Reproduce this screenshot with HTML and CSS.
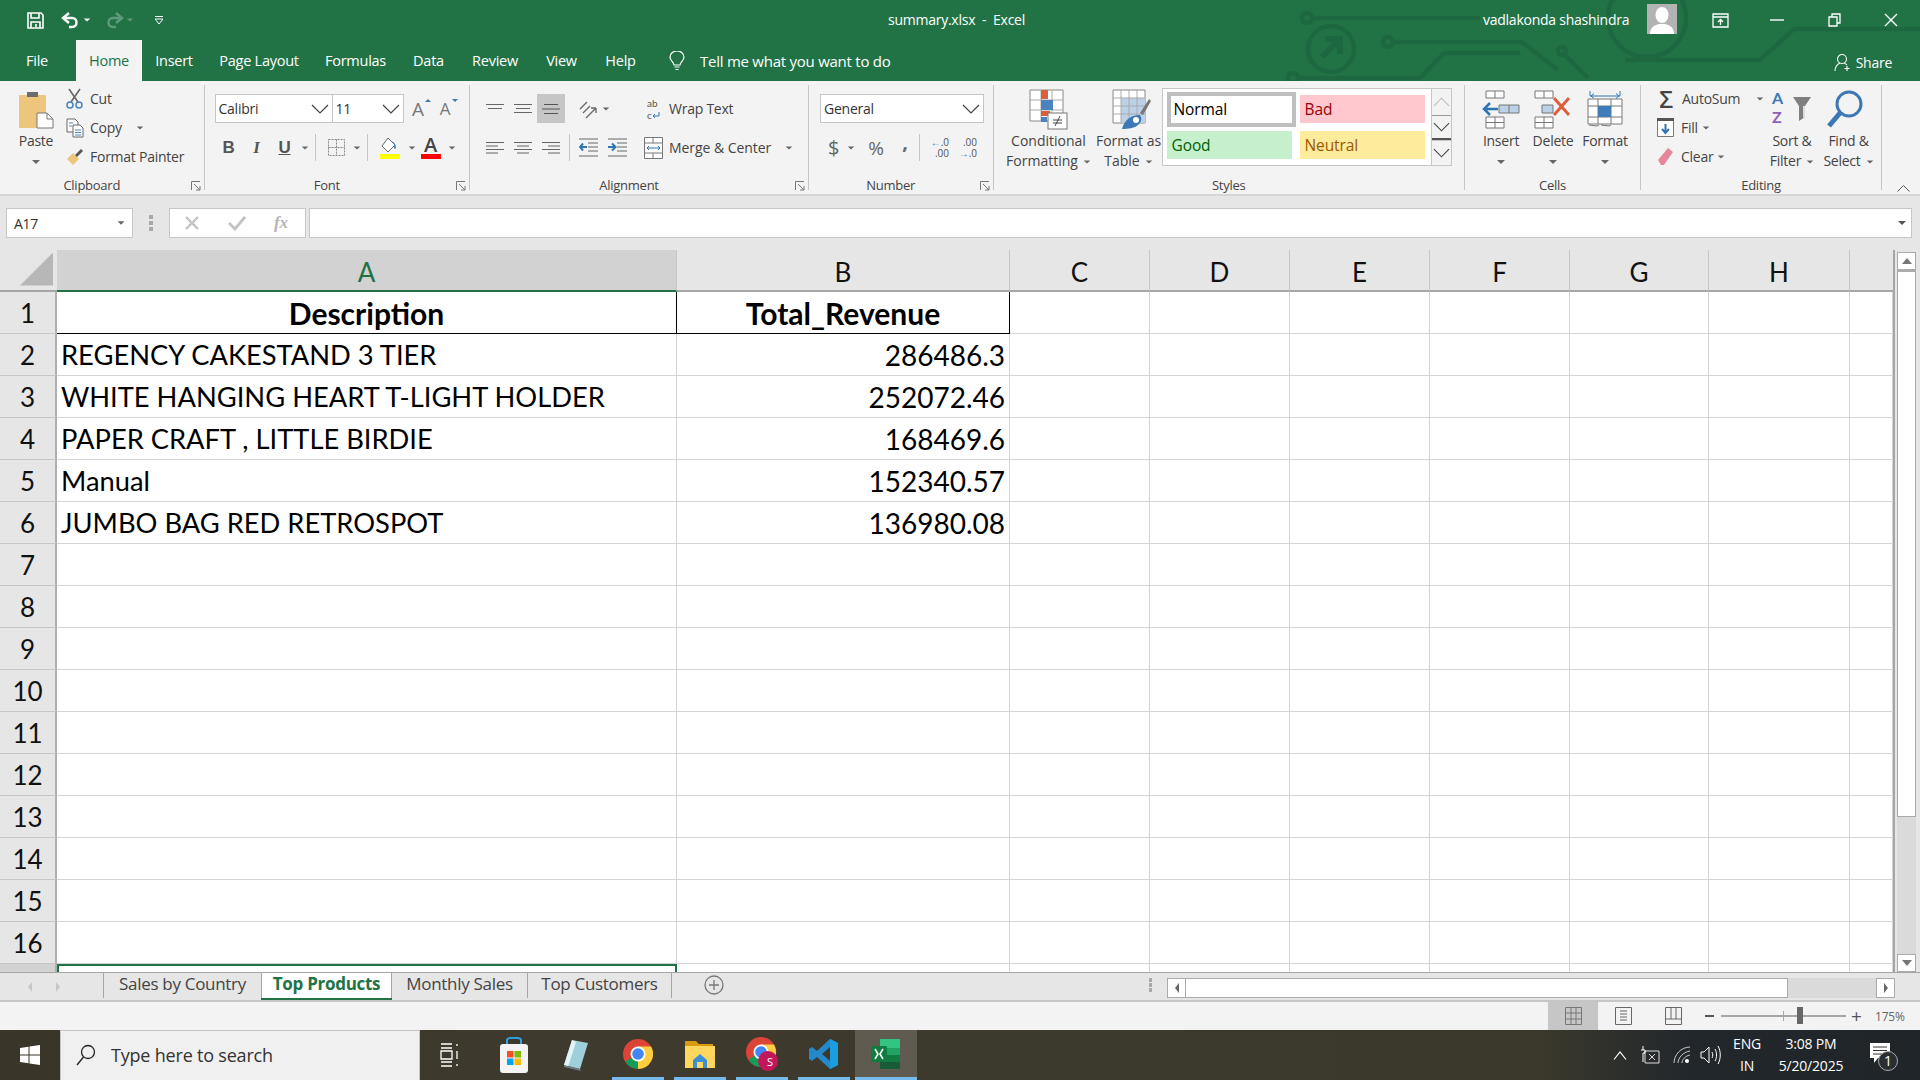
FILE: index.html
```html
<!DOCTYPE html>
<html lang="en">
<head>
<meta charset="UTF-8">
<title>summary.xlsx - Excel</title>
<link rel="stylesheet" href="styles.css">
</head>
<body>

<!-- title bar + tabs -->
<header class="top">
  <svg class="circuit" width="1920" height="81" viewBox="0 0 1920 81" fill="none" stroke="#1e6841" stroke-width="4.500">
    <circle cx="1307" cy="18" r="5"/><path d="M1312 18H1480"/>
    <circle cx="1331" cy="49" r="23"/><path d="M1322 57l18-18M1325 39h15v15" stroke-width="6"/>
    <circle cx="1388" cy="42" r="5"/><path d="M1393 42H1522l36 28M1562 52l26 26"/>
    <circle cx="1562" cy="51" r="4"/><circle cx="1293" cy="78" r="5"/><path d="M1298 78H1420l24-25H1520"/>
    <circle cx="1647" cy="18" r="39"/><path d="M1625 60H1760l34-31H1920"/>
  </svg>
  <div class="titlebar">
    <div class="qat">
      <svg class="qat-save" width="17" height="17" viewBox="0 0 17 17" fill="none" stroke="#fff" stroke-width="1.6"><path d="M1 1h13l2 2v13H1z"/><path d="M4 1v5h8V1" /><path d="M4 16v-6h9v6" /><path d="M9 12v3" /></svg>
      <svg class="qat-undo" width="20" height="17" viewBox="0 0 20 17" fill="none" stroke="#fff" stroke-width="2.4"><path d="M8 1L2 6l6 5"/><path d="M3 6h8c6 0 6 9 0 9H8"/></svg>
      <span class="caret qat-caret"></span>
      <svg class="qat-redo" width="20" height="17" viewBox="0 0 20 17" fill="none" stroke="#5f9a7c" stroke-width="2.4"><path d="M12 1l6 5-6 5"/><path d="M17 6H9c-6 0-6 9 0 9h3"/></svg>
      <span class="caret qat-caret dim"></span>
      <svg class="qat-more" width="10" height="10" viewBox="0 0 10 10" fill="none" stroke="#fff"><path d="M1 1.5h8M1 4l4 5 4-5z"/></svg>
    </div>
    <div class="doc-title">summary.xlsx&nbsp; -&nbsp; Excel</div>
    <div class="user-name">vadlakonda shashindra</div>
    <svg class="avatar" width="30" height="30" viewBox="0 0 30 30"><rect width="30" height="30" fill="#b3b3b3"/><ellipse cx="15" cy="11" rx="6.5" ry="8" fill="#fff"/><path d="M3 30c0-7 5-9 9-10h6c4 1 9 3 9 10z" fill="#fff"/></svg>
    <div class="win-btns">
      <svg width="17" height="15" viewBox="0 0 17 15" fill="none" stroke="#fff" stroke-width="1.3"><path d="M1 1h15v13H1zM1 4h15"/><path d="M8.5 12V6.5M6 9l2.5-2.5L11 9"/></svg>
      <svg width="14" height="2" viewBox="0 0 14 2"><path d="M0 1h14" stroke="#fff" stroke-width="1.4"/></svg>
      <svg width="13" height="14" viewBox="0 0 13 14" fill="none" stroke="#fff" stroke-width="1.3"><path d="M1 4h8v9H1zM4 4V1h8v9H9"/></svg>
      <svg width="14" height="14" viewBox="0 0 14 14"><path d="M1 1l12 12M13 1L1 13" stroke="#fff" stroke-width="1.4"/></svg>
    </div>
  </div>
  <nav class="tabs">
    <a>File</a><a class="on">Home</a><a>Insert</a><a>Page Layout</a><a>Formulas</a><a>Data</a><a>Review</a><a>View</a><a>Help</a>
    <div class="tellme">
      <svg width="16" height="20" viewBox="0 0 16 20" fill="none" stroke="#fff" stroke-width="1.2"><path d="M5 14c0-3-4-4-4-8a7 6 0 0 1 14 0c0 4-4 5-4 8z"/><path d="M5.5 16h5M6.5 18.500h3"/></svg>
      <span>Tell me what you want to do</span>
    </div>
    <div class="share">
      <svg width="18" height="19" viewBox="0 0 18 19" fill="none" stroke="#fff" stroke-width="1.1"><circle cx="8" cy="6" r="4.500"/><path d="M1 18c0-5 3-7 5-8M10 10c1 .4 2 1 3 2M13 13v5M10.500 15.500h5"/></svg>
      <span>Share</span>
    </div>
  </nav>
</header>

<!-- ribbon -->
<section class="ribbon">

  <div class="group">
    <div class="body clip-body">
      <div class="big paste">
        <svg width="36" height="40" viewBox="0 0 36 40"><rect x="1" y="5" width="27" height="33" fill="#eec57d" rx="1"/><path d="M9 2h11v5H9z" fill="#6d6d6d"/><path d="M19 23h10l6 6v9H19z" fill="#fff" stroke="#777"/><path d="M29 23v6h6" fill="none" stroke="#777"/></svg>
        <span>Paste</span>
        <i class="caret"></i>
      </div>
      <div class="stack">
        <div class="small"><svg width="18" height="22" viewBox="0 0 18 22" fill="none"><path d="M3 1l9 13M14 1L5 14" stroke="#666" stroke-width="1.6"/><circle cx="4" cy="17" r="3" stroke="#4a83bd" stroke-width="1.500"/><circle cx="13" cy="17" r="3" stroke="#4a83bd" stroke-width="1.500"/></svg><span>Cut</span></div>
        <div class="small"><svg width="18" height="20" viewBox="0 0 18 20" fill="#fff" stroke="#666"><path d="M1 1h8l3 3v10H1z"/><path d="M7 7h7l3 3v9H7z"/><path d="M9 12h6M9 14.500h6M9 17h6M3 5h4M3 8h3" stroke="#4a83bd"/></svg><span>Copy</span><i class="caret copy-caret"></i></div>
        <div class="small"><svg width="18" height="18" viewBox="0 0 18 18"><path d="M1 11l6-6 6 6-6 6z" fill="#eec57d"/><path d="M9 7l6-6 2 2-6 6z" fill="#555"/></svg><span>Format Painter</span></div>
      </div>
    </div>
    <div class="label with-launch">Clipboard<svg class="launch" width="10" height="10" viewBox="0 0 10 10" fill="none" stroke="#777"><path d="M.5 9V.5H9M3 3l6 6M9 5v4H5"/></svg></div>
  </div>

  <div class="group">
    <div class="body two-rows">
      <div class="row font-top">
        <div class="combo font-name">Calibri<svg class="chev" width="18" height="10" viewBox="0 0 18 10" fill="none" stroke="#444" stroke-width="1.2"><path d="M1 1l8 8 8-8"/></svg></div>
        <div class="combo font-size">11<svg class="chev" width="18" height="10" viewBox="0 0 18 10" fill="none" stroke="#444" stroke-width="1.2"><path d="M1 1l8 8 8-8"/></svg></div>
        <span class="grow">A<i class="tip up"></i></span><span class="grow shrink">A<i class="tip down"></i></span>
      </div>
      <div class="row font-bottom">
        <b class="fmt">B</b><em class="fmt">I</em><span class="fmt under">U</span><i class="caret"></i>
        <span class="vsep"></span>
        <svg class="borders" width="17" height="17" viewBox="0 0 17 17" fill="none" stroke="#888" stroke-dasharray="2 1"><path d="M.5.5h16v16H.5zM8.500 .5v16M.5 8.500h16"/></svg><i class="caret"></i>
        <span class="vsep"></span>
        <svg class="fill-ic" width="20" height="22" viewBox="0 0 20 22"><path d="M8 1l-6 8 6 6 7-7z" fill="#fff" stroke="#666"/><path d="M11 4c3 1 5 3 5 7 0 1-2 1-2 0V7z" fill="#4a83bd"/><rect y="17" width="20" height="5" fill="#ffff00"/></svg><i class="caret"></i>
        <span class="color-a">A</span><i class="caret"></i>
      </div>
    </div>
    <div class="label with-launch">Font<svg class="launch" width="10" height="10" viewBox="0 0 10 10" fill="none" stroke="#777"><path d="M.5 9V.5H9M3 3l6 6M9 5v4H5"/></svg></div>
  </div>

  <div class="group">
    <div class="body align-body">
      <div class="align-icons">
        <div class="row">
          <span class="al"><svg width="18" height="10" viewBox="0 0 18 10" stroke="#666"><path d="M0 .5h18M2 4.500h14"/></svg></span>
          <span class="al"><svg width="18" height="10" viewBox="0 0 18 10" stroke="#666"><path d="M0 .5h18M2 4.500h14M0 8.500h18"/></svg></span>
          <span class="al on"><svg width="18" height="12" viewBox="0 0 18 12" stroke="#555"><path d="M2 1.500h14M0 6h18M2 10.500h14"/></svg></span>
          <svg class="orient" width="20" height="20" viewBox="0 0 20 20" fill="none" stroke="#666"><path d="M2 10l7-7M5 14l7-7M8 19l10-10M18 9v5M18 9h-5" stroke-width="1.300"/></svg><i class="caret"></i>
        </div>
        <div class="row second">
          <span class="al"><svg width="18" height="12" viewBox="0 0 18 12" stroke="#666"><path d="M0 .5h18M0 4h12M0 7.500h18M0 11h12"/></svg></span>
          <span class="al"><svg width="18" height="12" viewBox="0 0 18 12" stroke="#666"><path d="M0 .5h18M3 4h12M0 7.500h18M3 11h12"/></svg></span>
          <span class="al"><svg width="18" height="12" viewBox="0 0 18 12" stroke="#666"><path d="M0 .5h18M6 4h12M0 7.500h18M6 11h12"/></svg></span>
          <span class="vsep"></span>
          <svg class="indent" width="19" height="19" viewBox="0 0 19 19" fill="none"><path d="M0 1h19M9 5h10M9 9h10M9 13h10M0 18h19" stroke="#666"/><path d="M8 9H1M4 5.500L1 9l3 3.500" stroke="#2f75b5" stroke-width="2"/></svg>
          <svg class="indent" width="19" height="19" viewBox="0 0 19 19" fill="none"><path d="M0 1h19M9 5h10M9 9h10M9 13h10M0 18h19" stroke="#666"/><path d="M0 9h7M4 5.500L7.500 9 4 12.500" stroke="#2f75b5" stroke-width="2"/></svg>
        </div>
      </div>
      <div class="align-wide">
        <div class="row"><span class="wrap-ic">ab<br>c<svg width="8" height="8" viewBox="0 0 8 8" fill="none" stroke="#2f75b5"><path d="M7 1v4H1M3 3L1 5l2 2"/></svg></span><span>Wrap Text</span></div>
        <div class="row second"><svg class="merge-ic" width="19" height="22" viewBox="0 0 19 22" fill="#fff" stroke="#777"><path d="M.5.5h18v21H.5zM.5 6h18M.5 16h18M9 .5V6M9 16v5"/><path d="M3 11h13M5 9l-2 2 2 2M14 9l2 2-2 2" stroke="#2f75b5" fill="none"/></svg><span class="merge-text">Merge &amp; Center</span><i class="caret merge-caret"></i></div>
      </div>
    </div>
    <div class="label with-launch">Alignment<svg class="launch" width="10" height="10" viewBox="0 0 10 10" fill="none" stroke="#777"><path d="M.5 9V.5H9M3 3l6 6M9 5v4H5"/></svg></div>
  </div>

  <div class="group">
    <div class="body two-rows num-body">
      <div class="row"><div class="combo num-format">General<svg class="chev" width="18" height="10" viewBox="0 0 18 10" fill="none" stroke="#444" stroke-width="1.2"><path d="M1 1l8 8 8-8"/></svg></div></div>
      <div class="row num-tools">
        <span class="sym dollar">$</span><i class="caret"></i><span class="sym pct">%</span><span class="sym comma">,</span><span class="vsep"></span>
        <span class="dec"><b>←</b>.0<br>.00</span><span class="dec">.00<br><b>→</b>.0</span>
      </div>
    </div>
    <div class="label with-launch">Number<svg class="launch" width="10" height="10" viewBox="0 0 10 10" fill="none" stroke="#777"><path d="M.5 9V.5H9M3 3l6 6M9 5v4H5"/></svg></div>
  </div>

  <div class="group">
    <div class="body styles-body">
      <div class="big cf">
        <svg width="40" height="42" viewBox="0 0 40 42"><path d="M1 1h33v31H1z" fill="#fff" stroke="#888"/><path d="M1 11h33M1 21h33M12 1v31M23 1v31" stroke="#aaa" fill="none"/><rect x="12" y="1" width="7" height="9" fill="#d9603b"/><rect x="12" y="11" width="12" height="10" fill="#4a83bd"/><rect x="12" y="22" width="9" height="5" fill="#d9603b"/><rect x="12" y="28" width="6" height="5" fill="#4a83bd"/><rect x="19" y="24" width="19" height="16" fill="#fff" stroke="#777"/><path d="M24 31h9M24 34h9M31 27l-5 10" stroke="#444"/></svg>
        <span>Conditional</span><span>Formatting<i class="caret inline"></i></span>
      </div>
      <div class="big ft">
        <svg width="40" height="42" viewBox="0 0 40 42"><path d="M1 1h32v33H1z" fill="#fff" stroke="#888"/><rect x="9" y="9" width="24" height="25" fill="#bcd1e8"/><path d="M1 9h32M1 17h32M1 25h32M9 1v33M17 1v33M25 1v33" stroke="#aaa"/><path d="M28 24l9-14 2 2-8 14z" fill="#777"/><path d="M10 40c2-8 8-14 18-14 2 3 2 7-2 10-3 3-10 4-16 4z" fill="#3c78b5"/><circle cx="24" cy="31" r="3" fill="#fff"/></svg>
        <span>Format as</span><span>Table<i class="caret inline"></i></span>
      </div>
      <div class="gallery">
        <div class="cell-styles">
          <div class="st normal">Normal</div><div class="st bad">Bad</div>
          <div class="st good">Good</div><div class="st neutral">Neutral</div>
        </div>
        <div class="gal-btns">
          <span class="off"><svg width="18" height="10" viewBox="0 0 18 10" fill="none" stroke="#bbb" stroke-width="1.200"><path d="M1 9l8-8 8 8"/></svg></span>
          <span><svg width="18" height="10" viewBox="0 0 18 10" fill="none" stroke="#444" stroke-width="1.200"><path d="M1 1l8 8 8-8"/></svg></span>
          <span class="more"><svg width="18" height="10" viewBox="0 0 18 10" fill="none" stroke="#444" stroke-width="1.200"><path d="M1 1l8 8 8-8"/></svg></span>
        </div>
      </div>
    </div>
    <div class="label">Styles</div>
  </div>

  <div class="group">
    <div class="body cells-body">
      <div class="big"><svg width="38" height="40" viewBox="0 0 38 40" fill="#fff" stroke="#777"><path d="M4 1h18v7H4zM13 1v7M4 27h18v11H4zM4 32.500h18M13 27v11"/><path d="M17 15h20v8H17zM27 15v8" fill="#bcd1e8"/><path d="M16 19H2M8 13l-6 6 6 6" fill="none" stroke="#2f75b5" stroke-width="2.500"/></svg><span>Insert</span><i class="caret"></i></div>
      <div class="big"><svg width="38" height="40" viewBox="0 0 38 40" fill="#fff" stroke="#777"><path d="M1 1h18v7H1zM10 1v7M1 27h18v11H1zM1 32.500h18M10 27v11"/><path d="M8 15h11v8H8z" fill="#bcd1e8"/><path d="M20 8l15 17M35 8L20 25" stroke="#d9603b" stroke-width="3" fill="none"/></svg><span>Delete</span><i class="caret"></i></div>
      <div class="big"><svg width="38" height="40" viewBox="0 0 38 40" fill="#fff" stroke="#777"><path d="M4 6H34M4 1v5M34 1v5" stroke="#2f75b5" /><path d="M8 3.500L5 6l3 2.500M30 3.500L33 6l-3 2.500" stroke="#2f75b5" fill="none"/><path d="M2 9h34v25H2zM2 16h34M2 27h34M12 9v25M25 9v25"/><rect x="12" y="16" width="13" height="11" fill="#3f7cb8" stroke="none"/><path d="M3 35l8 1 2-1M15 35l8 1 2-1" fill="none"/></svg><span>Format</span><i class="caret"></i></div>
    </div>
    <div class="label">Cells</div>
  </div>

  <div class="group last">
    <div class="body edit-body">
      <div class="stack edit-stack">
        <div class="small"><span class="sigma">Σ</span><span>AutoSum</span><i class="caret auto-caret"></i></div>
        <div class="small"><svg width="17" height="19" viewBox="0 0 17 19" fill="#fff" stroke="#777"><path d="M.5.500h16v18H.5z"/><path d="M0 1.500h17" stroke="#555" stroke-width="3"/><path d="M8.500 6v9M5 11l3.500 4 3.500-4" stroke="#2f75b5" stroke-width="2" fill="none"/></svg><span>Fill</span><i class="caret inline"></i></div>
        <div class="small"><svg width="17" height="19" viewBox="0 0 17 19"><path d="M1 13l10-12 5 4L7 18H4z" fill="#e8879b"/></svg><span>Clear</span><i class="caret inline"></i></div>
      </div>
      <div class="big sortf"><div class="az"><div class="az-letters"><span class="a">A</span><span class="z">Z</span></div><svg width="18" height="24" viewBox="0 0 18 24"><path d="M0 0h18l-6 9v11l-6 4V9z" fill="#7f7f7f"/><path d="M6 9h6v11l-2 1V9z" fill="#ddd"/></svg></div><span>Sort &amp;</span><span>Filter<i class="caret inline"></i></span></div>
      <div class="big findsel"><svg width="36" height="40" viewBox="0 0 36 40" fill="none" stroke="#3c78b5"><circle cx="22" cy="14" r="12" stroke-width="3"/><path d="M13 23L2 36" stroke-width="5"/></svg><span>Find &amp;</span><span>Select<i class="caret inline"></i></span></div>
    </div>
    <div class="label">Editing</div>
  </div>

  <svg class="collapse" width="13" height="7" viewBox="0 0 13 7" fill="none" stroke="#555"><path d="M.5 6.500l6-6 6 6"/></svg>
</section>

<!-- formula bar -->
<section class="formula">
  <div class="namebox">A17<i class="caret"></i></div>
  <div class="dots"><i></i><i></i><i></i></div>
  <div class="fx-box">
    <svg width="16" height="16" viewBox="0 0 16 16" stroke="#c3c3c3" stroke-width="2.400"><path d="M2 2l12 12M14 2L2 14"/></svg>
    <svg width="18" height="16" viewBox="0 0 18 16" fill="none" stroke="#c3c3c3" stroke-width="2.800"><path d="M1 8l6 6L17 2"/></svg>
    <span class="fx">fx</span>
  </div>
  <div class="bar-input"><i class="caret bar-caret"></i></div>
</section>

<!-- grid -->
<section class="sheet">
  <table class="cells">
    <colgroup><col class="c-head"><col class="c-a"><col class="c-b"><col class="c-c"><col class="c-d"><col class="c-e"><col class="c-f"><col class="c-g"><col class="c-h"><col class="c-i"></colgroup>
    <thead>
      <tr><th class="corner"><span></span></th><th class="sel">A</th><th>B</th><th>C</th><th>D</th><th>E</th><th>F</th><th>G</th><th>H</th><th></th></tr>
    </thead>
    <tbody>
      <tr><th>1</th><td class="hd">Description</td><td class="hd">Total_Revenue</td><td></td><td></td><td></td><td></td><td></td><td></td><td></td></tr>
      <tr><th>2</th><td>REGENCY CAKESTAND 3 TIER</td><td class="num">286486.3</td><td></td><td></td><td></td><td></td><td></td><td></td><td></td></tr>
      <tr><th>3</th><td>WHITE HANGING HEART T-LIGHT HOLDER</td><td class="num">252072.46</td><td></td><td></td><td></td><td></td><td></td><td></td><td></td></tr>
      <tr><th>4</th><td>PAPER CRAFT , LITTLE BIRDIE</td><td class="num">168469.6</td><td></td><td></td><td></td><td></td><td></td><td></td><td></td></tr>
      <tr><th>5</th><td>Manual</td><td class="num">152340.57</td><td></td><td></td><td></td><td></td><td></td><td></td><td></td></tr>
      <tr><th>6</th><td>JUMBO BAG RED RETROSPOT</td><td class="num">136980.08</td><td></td><td></td><td></td><td></td><td></td><td></td><td></td></tr>
      <tr><th>7</th><td></td><td></td><td></td><td></td><td></td><td></td><td></td><td></td><td></td></tr>
      <tr><th>8</th><td></td><td></td><td></td><td></td><td></td><td></td><td></td><td></td><td></td></tr>
      <tr><th>9</th><td></td><td></td><td></td><td></td><td></td><td></td><td></td><td></td><td></td></tr>
      <tr><th>10</th><td></td><td></td><td></td><td></td><td></td><td></td><td></td><td></td><td></td></tr>
      <tr><th>11</th><td></td><td></td><td></td><td></td><td></td><td></td><td></td><td></td><td></td></tr>
      <tr><th>12</th><td></td><td></td><td></td><td></td><td></td><td></td><td></td><td></td><td></td></tr>
      <tr><th>13</th><td></td><td></td><td></td><td></td><td></td><td></td><td></td><td></td><td></td></tr>
      <tr><th>14</th><td></td><td></td><td></td><td></td><td></td><td></td><td></td><td></td><td></td></tr>
      <tr><th>15</th><td></td><td></td><td></td><td></td><td></td><td></td><td></td><td></td><td></td></tr>
      <tr><th>16</th><td></td><td></td><td></td><td></td><td></td><td></td><td></td><td></td><td></td></tr>
      <tr class="cut-row"><th class="sel"></th><td class="active"></td><td></td><td></td><td></td><td></td><td></td><td></td><td></td><td></td></tr>
    </tbody>
  </table>
  <div class="vscroll">
    <span class="sb-btn"><i class="tri-up"></i></span>
    <span class="sb-thumb"></span>
    <span class="sb-track"></span>
    <span class="sb-btn"><i class="tri-down"></i></span>
  </div>
</section>

<!-- sheet tabs -->
<section class="sheetbar">
  <div class="sheet-nav"><i class="tri-l"></i><i class="tri-r"></i></div>
  <div class="sheet-tab t1">Sales by Country</div>
  <div class="sheet-tab active">Top Products</div>
  <div class="sheet-tab t3">Monthly Sales</div>
  <div class="sheet-tab t4">Top Customers</div>
  <svg class="add-sheet" width="20" height="20" viewBox="0 0 20 20" fill="none" stroke="#777" stroke-width="1.300"><circle cx="10" cy="10" r="9"/><path d="M10 5v10M5 10h10"/></svg>
  <div class="dots sheet-dots"><i></i><i></i><i></i></div>
  <div class="hscroll">
    <span class="hs-btn"><i class="tri-l dark"></i></span>
    <span class="hs-thumb"></span>
    <span class="hs-track"></span>
    <span class="hs-btn"><i class="tri-r dark"></i></span>
  </div>
</section>

<!-- status bar -->
<section class="status">
  <span class="view on"><svg width="17" height="18" viewBox="0 0 17 18" fill="none" stroke="#777"><path d="M.5.500h16v17H.5zM.5 6h16M.5 12h16M6 .5v17M11 .5v17"/></svg></span>
  <span class="view"><svg width="17" height="18" viewBox="0 0 17 18" fill="none" stroke="#666"><path d="M.5.500h16v17H.5zM5 4h7M5 7h7M5 10h7M5 13h7"/></svg></span>
  <span class="view"><svg width="17" height="18" viewBox="0 0 17 18" fill="none" stroke="#666"><path d="M.5.500h16v17H.5zM.5 12h16M6 .5V12M11 .5V12"/></svg></span>
  <span class="zoom-minus"></span>
  <span class="slider"><i class="tick"></i><i class="knob"></i></span>
  <span class="zoom-plus">+</span>
  <span class="zoom-val">175%</span>
</section>

<!-- taskbar -->
<footer class="taskbar">
  <svg class="start" width="20" height="20" viewBox="0 0 20 20" fill="#fff"><path d="M0 3l8.500-1.300V9.500H0zM9.500 1.500L20 0v9.500H9.500zM0 10.500h8.500v7.800L0 17zM9.500 10.500H20V20L9.500 18.500z"/></svg>
  <div class="search">
    <svg width="20" height="22" viewBox="0 0 20 22" fill="none" stroke="#222" stroke-width="1.300"><circle cx="12" cy="8" r="6.500"/><path d="M7.500 13L1 21"/></svg>
    <span>Type here to search</span>
  </div>
  <div class="apps">
    <span class="app no-line"><svg width="20" height="24" viewBox="0 0 20 24" fill="none" stroke="#fff" stroke-width="1.300"><path d="M1 5h11M1 1h11M1 19h11M1 23h11M1 8h11v8H1zM17 1v2M17 8v8M17 21v2"/></svg></span>
    <span class="app no-line"><svg width="30" height="36" viewBox="0 0 30 36"><path d="M8 8V3c0-3 14-3 14 0v5" fill="none" stroke="#2ea4e8" stroke-width="2"/><rect x="1" y="7" width="28" height="29" rx="3" fill="#f4f4f4"/><rect x="8" y="14" width="6.500" height="6.500" fill="#f25022"/><rect x="15.500" y="14" width="6.500" height="6.500" fill="#7fba00"/><rect x="8" y="21.500" width="6.500" height="6.500" fill="#00a4ef"/><rect x="15.500" y="21.500" width="6.500" height="6.500" fill="#ffb900"/></svg></span>
    <span class="app no-line"><svg width="28" height="32" viewBox="0 0 28 32"><path d="M10 1l16 3-8 26L2 26z" fill="#9fd0da"/><path d="M10 1l4 2-8 25-4-2z" fill="#e4f3f5"/><path d="M2 26l16 4 1 2-17-4z" fill="#6b7c80"/></svg></span>
    <span class="app line">
      <svg width="30" height="30" viewBox="0 0 30 30"><circle cx="15" cy="15" r="15" fill="#db4437"/><path d="M15 15L2.500 22.500A15 15 0 0 0 15 30z" fill="#0f9d58"/><path d="M15 15v15a15 15 0 0 0 13-22.500H15z" fill="#ffcd40"/><circle cx="15" cy="15" r="7.500" fill="#fff"/><circle cx="15" cy="15" r="5.800" fill="#4285f4"/></svg>
    </span>
    <span class="app line"><svg width="30" height="28" viewBox="0 0 30 28"><path d="M0 1h11l3 3h14v4H0z" fill="#d99a0d"/><rect y="6" width="30" height="22" fill="#ffd75e"/><path d="M8 20l7-6 7 6v8H8z" fill="#3c8fd6"/><rect x="12" y="22" width="6" height="6" fill="#ffd75e"/></svg></span>
    <span class="app line">
      <svg width="32" height="34" viewBox="0 0 32 34"><circle cx="15" cy="15" r="15" fill="#db4437"/><path d="M15 15L2.500 22.500A15 15 0 0 0 15 30z" fill="#0f9d58"/><path d="M15 15v15a15 15 0 0 0 13-22.500H15z" fill="#ffcd40"/><circle cx="15" cy="15" r="7.500" fill="#fff"/><circle cx="15" cy="15" r="5.800" fill="#4285f4"/><circle cx="22" cy="24" r="10" fill="#c2185b"/></svg>
      <em class="badge-s">S</em>
    </span>
    <span class="app line"><svg width="30" height="30" viewBox="0 0 30 30"><path d="M21 0l8 4v22l-8 4L8 18l-5 4-3-2v-10l3-2 5 4z" fill="#2489ca"/><path d="M21 8l-8 7 8 7z" fill="#3c3a2d"/><path d="M21 0l8 4v22l-8 4z" fill="#1b9de2"/></svg></span>
    <span class="app line current"><svg width="30" height="30" viewBox="0 0 30 30"><rect x="9" width="20" height="9" fill="#33c481"/><rect x="9" y="9" width="20" height="7" fill="#21a366"/><rect x="9" y="16" width="20" height="7" fill="#107c41"/><rect x="9" y="23" width="20" height="7" fill="#185c37"/><rect y="7" width="16" height="16" rx="1" fill="#107c41"/><path d="M4 10l3 5-3 5M12 10l-3 5 3 5" stroke="#fff" stroke-width="1.600" fill="none"/></svg></span>
  </div>
  <div class="tray">
    <svg width="14" height="9" viewBox="0 0 14 9" fill="none" stroke="#fff" stroke-width="1.200"><path d="M1 8.500l6-7.500 6 7.500"/></svg>
    <svg width="20" height="20" viewBox="0 0 20 20" fill="none" stroke="#ddd"><path d="M5 6h14v12H5zM9 9l6 6M15 9l-6 6"/><path d="M3 1v4M1 5h4v3H3v9" stroke="#fff"/></svg>
    <svg width="18" height="18" viewBox="0 0 18 18" fill="none" stroke="#ccc"><path d="M1 17C1 9 8 1 17 1M5 17c0-5 5-11 12-12M9 17c0-3 3-7 8-8"/><circle cx="14" cy="15" r="2" fill="#fff" stroke="none"/></svg>
    <svg class="vol" width="22" height="22" viewBox="0 0 22 22" fill="none" stroke="#fff"><path d="M1 8h3l5-5v16l-5-5H1zM12 8c1 2 1 4 0 6M15 5c2 3 2 9 0 12M18 2c3 5 3 13 0 18"/></svg>
    <div class="lang"><span>ENG</span><span>IN</span></div>
    <div class="clock"><span>3:08 PM</span><span>5/20/2025</span></div>
    <span class="notif"><svg width="22" height="20" viewBox="0 0 22 20"><path d="M1 0h20v15H9l-4 5v-5H1z" fill="#fff"/><path d="M4 4h14M4 7.500h14M4 11h14" stroke="#333"/></svg><em>1</em></span>
  </div>
</footer>

</body>
</html>
```

FILE: styles.css
```css
* { box-sizing: border-box; }
html, body {
  margin: 0;
  width: 1920px;
  height: 1080px;
  overflow: hidden;
}
body {
  font-family: "Open Sans", sans-serif;
  font-size: 14px;
  letter-spacing: -0.25px;
  color: #444;
  background: #e6e6e6;
}
i, em { font-style: normal; }

/* small dropdown triangle, used all over the ribbon */
.caret {
  display: inline-block;
  width: 0;
  height: 0;
  border-left: 4px solid transparent;
  border-right: 4px solid transparent;
  border-top: 4px solid #666;
}
.caret.inline { margin-left: 5px; vertical-align: middle; transform: scale(.8); }

/* title bar */
.top {
  position: relative;
  height: 81px;
  background: #217346;
  color: #fff;
}
.circuit { position: absolute; left: 0; top: 0; }
.titlebar {
  position: relative;
  display: flex;
  align-items: center;
  height: 40px;
}
.qat { display: flex; align-items: center; width: 888px; }
.qat-save { margin-left: 27px; }
.qat-undo { margin-left: 17px; }
.qat .caret { border-top-color: #fff; transform: scale(.8); }
.qat-caret { margin-left: 2px; }
.qat .dim { border-top-color: #5f9a7c; }
.qat-redo { margin-left: 13px; }
.qat-more { margin-left: 20px; }
.doc-title { width: 595px; margin-top: -2px; white-space: nowrap; }
.user-name { width: 164px; margin-top: -2px; white-space: nowrap; }
.avatar { margin-top: -2px; }
.win-btns { display: flex; align-items: center; margin-left: 35px; }
.win-btns svg:nth-child(2) { margin-left: 41px; }
.win-btns svg:nth-child(3) { margin-left: 44px; }
.win-btns svg:nth-child(4) { margin-left: 43px; }

.tabs {
  position: relative;
  display: grid;
  grid-template-columns: 74px 68px 64px 106px 87px 59px 74px 59px 59px 1fr auto;
  height: 41px;
  font-size: 14.500px;
}
.tabs a {
  text-align: center;
  line-height: 41px;
  height: 41px;
}
.tabs a.on { margin-left: 2px; background: #f3f3f3; color: #217346; }
.tellme {
  display: flex;
  align-items: center;
  gap: 15px;
  margin: 0 0 0 19px;
  font-size: 15px;
}
.share {
  display: flex;
  align-items: center;
  gap: 4px;
  margin: 0 28px 0 0;
  padding-top: 4px;
  font-size: 14px;
}

/* ribbon */
.ribbon {
  position: relative;
  display: grid;
  grid-template-columns: 204.5px 265.5px 339px 184.5px 471.5px 176px 241px;
  height: 115px;
  padding-top: 4px;
  background: #f3f3f3;
  border-bottom: 2px solid #d6d6d6;
}
.group {
  position: relative;
  height: 105px;
  border-right: 1.5px solid #c6c6c6;
}
.body { height: 87px; }
.label {
  position: relative;
  height: 18px;
  text-align: center;
  font-size: 13px;
  line-height: 26px;
  color: #444;
}
.label.with-launch { padding-right: 20px; }
.launch { position: absolute; right: 3px; top: 9px; }
.row { display: flex; align-items: center; height: 29px; }
.vsep { display: inline-block; flex: none; width: 1px; height: 27px; background: #c6c6c6; }

.big {
  display: flex;
  flex-direction: column;
  align-items: center;
  font-size: 14px;
  line-height: 20px;
  white-space: nowrap;
}
.big > svg, .big > .az { height: 42px; margin-top: 4px; flex: none; }
.big > .caret { margin-top: 9px; }
.small { display: flex; align-items: center; height: 29px; gap: 6px; white-space: nowrap; }
.stack { display: flex; flex-direction: column; margin-top: -1px; }

/* clipboard */
.clip-body { display: flex; }
.paste { width: 66px; padding-left: 6px; }
.clip-body .small svg { width: 18px; }
.copy-caret { margin-left: 8px; transform: scale(.8); }

/* font */
.two-rows { padding-top: 9px; }
.font-top { padding-left: 10px; }
.combo {
  position: relative;
  display: flex;
  align-items: center;
  justify-content: space-between;
  height: 29px;
  padding: 0 3px;
  background: #fff;
  border: 1px solid #c6c6c6;
  color: #333;
}
.font-name { width: 118px; }
.font-size { width: 72px; margin-left: -1px; padding-right: 3px; }
.grow {
  position: relative;
  width: 27px;
  text-align: center;
  font-size: 19px;
  color: #777;
}
.grow:first-of-type { margin-left: 1px; }
.shrink { font-size: 17px; }
.tip { position: absolute; width: 0; height: 0; border: 3px solid transparent; right: 1px; }
.tip.up { top: 0; border-bottom: 3px solid #3c78b5; }
.tip.down { top: 2px; border-top: 3px solid #3c78b5; }
.font-bottom { margin-top: 10px; padding-left: 10px; }
.fmt {
  width: 28px;
  text-align: center;
  font-size: 17px;
  color: #555;
  font-family: "Liberation Sans", sans-serif;
}
b.fmt { font-weight: bold; }
em.fmt { font-style: italic; font-family: "Liberation Serif", serif; font-weight: bold; }
.under { text-decoration: underline; font-weight: bold; }
.font-bottom .caret { transform: scale(.8); margin: 0 6px 0 2px; }
.borders { margin: 0 6px 0 12px; }
.fill-ic { margin: 0 6px 0 12px; }
.font-bottom > .caret:last-child { margin-left: 7px; }
.color-a {
  width: 20px;
  margin-left: -1px;
  text-align: center;
  font-size: 20px;
  line-height: 18px;
  font-weight: 600;
  color: #444;
  border-bottom: 5px solid #f00;
}

/* alignment */
.align-body { display: flex; padding-top: 9px; }
.align-icons { width: 177px; padding-left: 11px; }
.second { margin-top: 10px; }
.al {
  display: flex;
  align-items: center;
  justify-content: center;
  width: 28px;
  height: 29px;
}
.al.on { background: #c6c6c6; }
.orient { margin-left: 13px; }
.align-icons .row > .caret { margin-left: 4px; transform: scale(.8); }
.align-icons .vsep { margin: 0 9px 0 4px; }
.indent { margin-right: 10px; }
.align-wide { width: 160px; }
.align-wide .row { gap: 6px; white-space: nowrap; }
.wrap-ic {
  width: 16px;
  font-family: Lato, sans-serif;
  font-size: 10px;
  line-height: 12px;
  letter-spacing: 0;
  text-align: left;
  color: #555;
}
.merge-ic { margin-left: -3px; }
.merge-text { letter-spacing: -.05px; }
.merge-caret { margin-left: 8px; transform: scale(.8); }

/* number */
.num-body .row:first-child { padding-left: 11px; }
.num-format { width: 164px; }
.num-tools { margin-top: 10px; padding-left: 17px; }
.sym { font-size: 20px; color: #666; text-align: center; }
.dollar { width: 15px; }
.num-tools .caret { margin-left: 6px; transform: scale(.8); }
.pct { width: 22px; margin-left: 10px; font-size: 19px; }
.comma { width: 14px; margin: 0 0 12px 11px; font-weight: bold; }
.num-tools .vsep { margin-left: 7px; }
.dec {
  width: 22px;
  margin-left: 7px;
  font-size: 10px;
  line-height: 11px;
  letter-spacing: 0;
  text-align: right;
  color: #555;
}
.dec b { color: #2f75b5; }
.dec + .dec { margin-left: 6px; }

/* styles */
.styles-body { display: flex; }
.cf { width: 90px; margin-left: 10px; letter-spacing: 0; }
.ft { width: 82px; margin-left: -6px; letter-spacing: 0; }
.ft > svg { margin-left: 6px; }
.gallery {
  display: flex;
  flex: none;
  width: 290px;
  height: 78px;
  margin: 3px 0 0 -8px;
  background: #fff;
  border: 1px solid #c6c6c6;
}
.cell-styles {
  display: grid;
  grid-template-columns: 129px 125px;
  grid-template-rows: 35px 28px;
  column-gap: 4px;
  row-gap: 4px;
  padding: 3px 0 0 4px;
  width: 269px;
}
.st {
  display: flex;
  align-items: center;
  padding-left: 5px;
  font-size: 15.500px;
  letter-spacing: -.1px;
}
.normal { border: 4px solid #bfbfbf; color: #000; padding: 0 0 2px 3px; }
.bad { background: #ffc7ce; color: #9c0006; height: 28px; margin-top: 3px; }
.good { background: #c6efce; color: #006100; width: 125px; }
.neutral { background: #ffeb9c; color: #9c5700; }
.gal-btns {
  display: flex;
  flex-direction: column;
  width: 20px;
  border-left: 1px solid #c6c6c6;
}
.gal-btns span {
  display: flex;
  align-items: center;
  justify-content: center;
  background: #f3f3f3;
}
.gal-btns svg { width: 17px; }
.gal-btns span:nth-child(1) { height: 26px; }
.gal-btns span:nth-child(2) { height: 23px; border-top: 1px solid #999; }
.gal-btns .more { height: 27px; border-top: 2px solid #555; box-shadow: inset 0 1px #c6c6c6; }

/* cells */
.cells-body { display: flex; padding-left: 10px; }
.cells-body .big { width: 52px; }

/* editing */
.edit-body { display: flex; }
.edit-stack { width: 124px; padding-left: 16px; }
.edit-stack .small { gap: 7px; }
.sigma { width: 18px; font-size: 24px; line-height: 24px; color: #444; text-align: center; font-weight: 600; }
.auto-caret { margin-left: 9px; transform: scale(.8); }
.edit-stack .caret.inline { margin-left: -3px; }
.sortf { width: 58px; margin-left: -2px; }
.az { display: flex; width: 40px; }
.az-letters {
  display: flex;
  flex-direction: column;
  width: 20px;
  margin-top: -1px;
  font-family: Lato, sans-serif;
  font-size: 16px;
  line-height: 19.200px;
  font-weight: bold;
  letter-spacing: 0;
}
.az .a { color: #3c78b5; }
.az .z { color: #8e5fb5; }
.az svg { margin: 8px 0 0 1px; }
.findsel { width: 55px; }
.findsel > svg { margin-right: 8px; }
.collapse { position: absolute; right: 10px; top: 104px; }

/* formula bar */
.formula {
  display: flex;
  align-items: flex-start;
  height: 54px;
  padding-top: 12px;
  background: #e6e6e6;
}
.namebox {
  display: flex;
  align-items: center;
  justify-content: space-between;
  width: 127px;
  height: 30px;
  margin-left: 6px;
  padding: 0 7px;
  background: #fff;
  border: 1px solid #c6c6c6;
  color: #333;
}
.namebox .caret { transform: scale(.85); }
.dots { display: flex; flex-direction: column; gap: 2px; margin: 7px 15px 0 16px; width: 5px; }
.dots i { width: 4px; height: 4px; background: #a9a9a9; }
.fx-box {
  display: flex;
  align-items: center;
  gap: 28px;
  width: 137px;
  height: 30px;
  padding-left: 14px;
  background: #fff;
  border: 1px solid #c6c6c6;
}
.fx {
  font-family: "Liberation Serif", serif;
  font-style: italic;
  font-weight: bold;
  font-size: 17px;
  color: #b5b5b5;
}
.bar-input {
  display: flex;
  align-items: center;
  justify-content: flex-end;
  width: 1603px;
  height: 30px;
  margin-left: 3px;
  padding-right: 5px;
  background: #fff;
  border: 1px solid #c6c6c6;
}
.bar-caret { border-top-color: #555; }

/* grid */
.sheet {
  display: flex;
  height: 723px;
  overflow: hidden;
  background: #e6e6e6;
  border-bottom: 1px solid #a6a6a6;
}
.cells {
  width: 1895px;
  height: 723px;
  table-layout: fixed;
  border-collapse: separate;
  border-spacing: 0;
  font-family: Lato, sans-serif;
  font-size: 27.300px;
  letter-spacing: 0;
  color: #000;
  background: #fff;
  border-right: 2px solid #a6a6a6;
}
.c-head { width: 57px; }
.c-a { width: 620px; }
.c-b { width: 333px; }
.c-c { width: 140px; }
.c-d { width: 140px; }
.c-e { width: 140px; }
.c-f { width: 140px; }
.c-g { width: 139px; }
.c-h { width: 141px; }
.cells thead tr { height: 42px; }
.cells tbody tr { height: 42px; }
.cells tbody tr.cut-row { height: 9px; }
.cells th {
  padding: 0;
  font-size: 26px;
  font-weight: normal;
  color: #111;
  text-align: center;
  background: #e6e6e6;
  border-right: 1px solid #b0b0b0;
  border-bottom: 1px solid #c6c6c6;
}
.cells thead th {
  padding-top: 3px;
  border-right: 1px solid #c6c6c6;
  border-bottom: 2px solid #a6a6a6;
}
.cells thead th.sel {
  background: #d2d2d2;
  color: #217346;
  border-bottom: 2px solid #217346;
}
.cells thead th:last-child { border-right: 0; }
.cells tbody th { border-right: 2px solid #b0b0b0; }
.cells tbody th.sel { background: #d2d2d2; border-bottom: 0; }
.cells th.corner { position: relative; padding-top: 0; border-right: 0; border-bottom: 2px solid #a6a6a6; }
.corner span {
  display: block;
  width: 33px;
  height: 33px;
  margin: 0 0 2px 20px;
  background: #b7b7b7;
  clip-path: polygon(100% 0, 100% 100%, 0 100%);
}
.cells td {
  padding: 0 4px;
  white-space: nowrap;
  overflow: hidden;
  border-right: 1px solid #d4d4d4;
  border-bottom: 1px solid #d4d4d4;
}
.cells td.num { font-size: 28px; text-align: right; }
.cells td.hd {
  font-size: 30px;
  font-weight: bold;
  text-align: center;
  border-right: 1px solid #000;
  border-bottom: 1px solid #000;
}
.cells td.active {
  border: 2px solid #217346;
  border-bottom: 0;
}
.cut-row td:not(.active) { border-bottom: 0; }

.vscroll {
  display: flex;
  flex-direction: column;
  width: 19px;
  margin: 2px 0 0 2px;
}
.sb-btn {
  display: flex;
  align-items: center;
  justify-content: center;
  height: 18px;
  background: #fff;
  border: 1px solid #ababab;
}
.sb-thumb { height: 547px; background: #fff; border: 1px solid #ababab; border-top: 2px solid #ababab; }
.sb-track { flex: 1; background: #dadada; }
.tri-up, .tri-down { width: 0; height: 0; border-left: 5px solid transparent; border-right: 5px solid transparent; }
.tri-up { border-bottom: 6px solid #777; }
.tri-down { border-top: 6px solid #777; }

/* sheet tabs */
.sheetbar {
  display: flex;
  height: 29px;
  background: #e6e6e6;
  border-bottom: 2px solid #c6c6c6;
}
.sheet-nav { display: flex; align-items: center; gap: 24px; width: 103px; padding-left: 28px; }
.tri-l, .tri-r { width: 0; height: 0; border-top: 5px solid transparent; border-bottom: 5px solid transparent; }
.tri-l { border-right: 4px solid #c6c6c6; }
.tri-r { border-left: 4px solid #c6c6c6; }
.tri-l.dark { border-right-color: #666; }
.tri-r.dark { border-left-color: #666; }
.sheet-tab {
  height: 25px;
  line-height: 21px;
  text-align: center;
  font-size: 17px;
  letter-spacing: -.3px;
  color: #444;
  white-space: nowrap;
  border-left: 1px solid #a6a6a6;
}
.t1 { width: 158px; }
.sheet-tab.active {
  width: 131px;
  height: 27px;
  background: #fff;
  font-weight: bold;
  color: #217346;
  border-left: 0;
  border-bottom: 2px solid #217346;
  box-shadow: inset 1px 0 #a6a6a6, inset -1px 0 #a6a6a6;
}
.t3 { width: 135px; border-left: 0; }
.t4 { width: 145px; border-right: 1px solid #a6a6a6; }
.add-sheet { margin: 2px 0 0 32px; }
.sheet-dots { margin: 5px 0 0 425px; gap: 1px; }
.sheet-dots i { width: 3px; height: 4px; }
.hscroll { display: flex; height: 20px; margin: 5px 0 0 13px; }
.hs-btn {
  display: flex;
  align-items: center;
  justify-content: center;
  width: 19px;
  background: #fff;
  border: 1px solid #ababab;
}
.hs-thumb { width: 602px; background: #fff; border: 1px solid #ababab; border-left: 0; }
.hs-track { width: 88px; background: #dadada; }

/* status bar */
.status {
  display: flex;
  align-items: center;
  height: 28px;
  padding-left: 1548px;
  background: #f3f3f3;
  color: #666;
}
.view { display: flex; align-items: center; justify-content: center; width: 50px; height: 28px; }
.view.on { background: #c6c6c6; }
.zoom-minus { width: 9px; height: 2px; margin-left: 7px; background: #555; }
.slider { position: relative; width: 125px; height: 2px; margin-left: 7px; background: #a6a6a6; }
.tick { position: absolute; left: 62px; top: -4px; width: 1px; height: 10px; background: #a6a6a6; }
.knob { position: absolute; left: 76px; top: -8px; width: 6px; height: 17px; background: #666; }
.zoom-plus { margin-left: 5px; width: 14px; font-size: 19px; color: #555; }
.zoom-val { margin-left: 10px; font-size: 12px; letter-spacing: -.2px; }

/* taskbar */
.taskbar {
  display: flex;
  align-items: center;
  height: 50px;
  color: #fff;
  background: linear-gradient(90deg, #3a3529 0%, #3e3a2d 30%, #3c3a2d 60%, #3b392c 80%, #22272c 88%, #20252a 100%);
}
.start { margin-left: 20px; flex: none; }
.search {
  display: flex;
  flex: none;
  align-items: center;
  gap: 15px;
  width: 360px;
  height: 50px;
  margin-left: 20px;
  padding: 0 0 2px 15px;
  font-size: 18px;
  letter-spacing: -.2px;
  color: #333;
  background: #f0f0f0;
  border: 1px solid #c6c6c6;
  border-width: 1px 1px 0 1px;
}
.apps { display: flex; flex: none; align-items: center; height: 50px; }
.app {
  position: relative;
  display: flex;
  flex: none;
  align-items: center;
  justify-content: center;
  width: 62px;
  height: 50px;
}
.app.line { border-bottom: 3px solid transparent; background-clip: padding-box; }
.app.line::after {
  content: "";
  position: absolute;
  left: 5px;
  right: 5px;
  bottom: -3px;
  height: 3px;
  background: #76b9ed;
}
.app.current { background-color: #5f5b50; }
.app.current::after { left: 0; right: 0; }
.apps .app:first-child { width: 60px; margin-right: 3px; }
.badge-s {
  position: absolute;
  left: 36px;
  top: 24px;
  font-size: 11px;
  color: #fff;
}
.tray {
  display: flex;
  flex: none;
  align-items: center;
  margin-left: 696px;
  gap: 13px;
  font-size: 14px;
  letter-spacing: -.2px;
}
.vol { margin-left: -4px; }
.lang, .clock {
  display: flex;
  flex-direction: column;
  align-items: center;
  line-height: 22px;
  padding-bottom: 1px;
}
.lang { width: 32px; margin-left: -4px; }
.clock { width: 74px; margin-left: -2px; }
.notif { position: relative; margin-left: 8px; }
.notif em {
  position: absolute;
  left: 9px;
  top: 8px;
  width: 20px;
  height: 20px;
  line-height: 18px;
  text-align: center;
  font-size: 14px;
  border-radius: 50%;
  background: #2b2e30;
  border: 1px solid #aaa;
}
```
